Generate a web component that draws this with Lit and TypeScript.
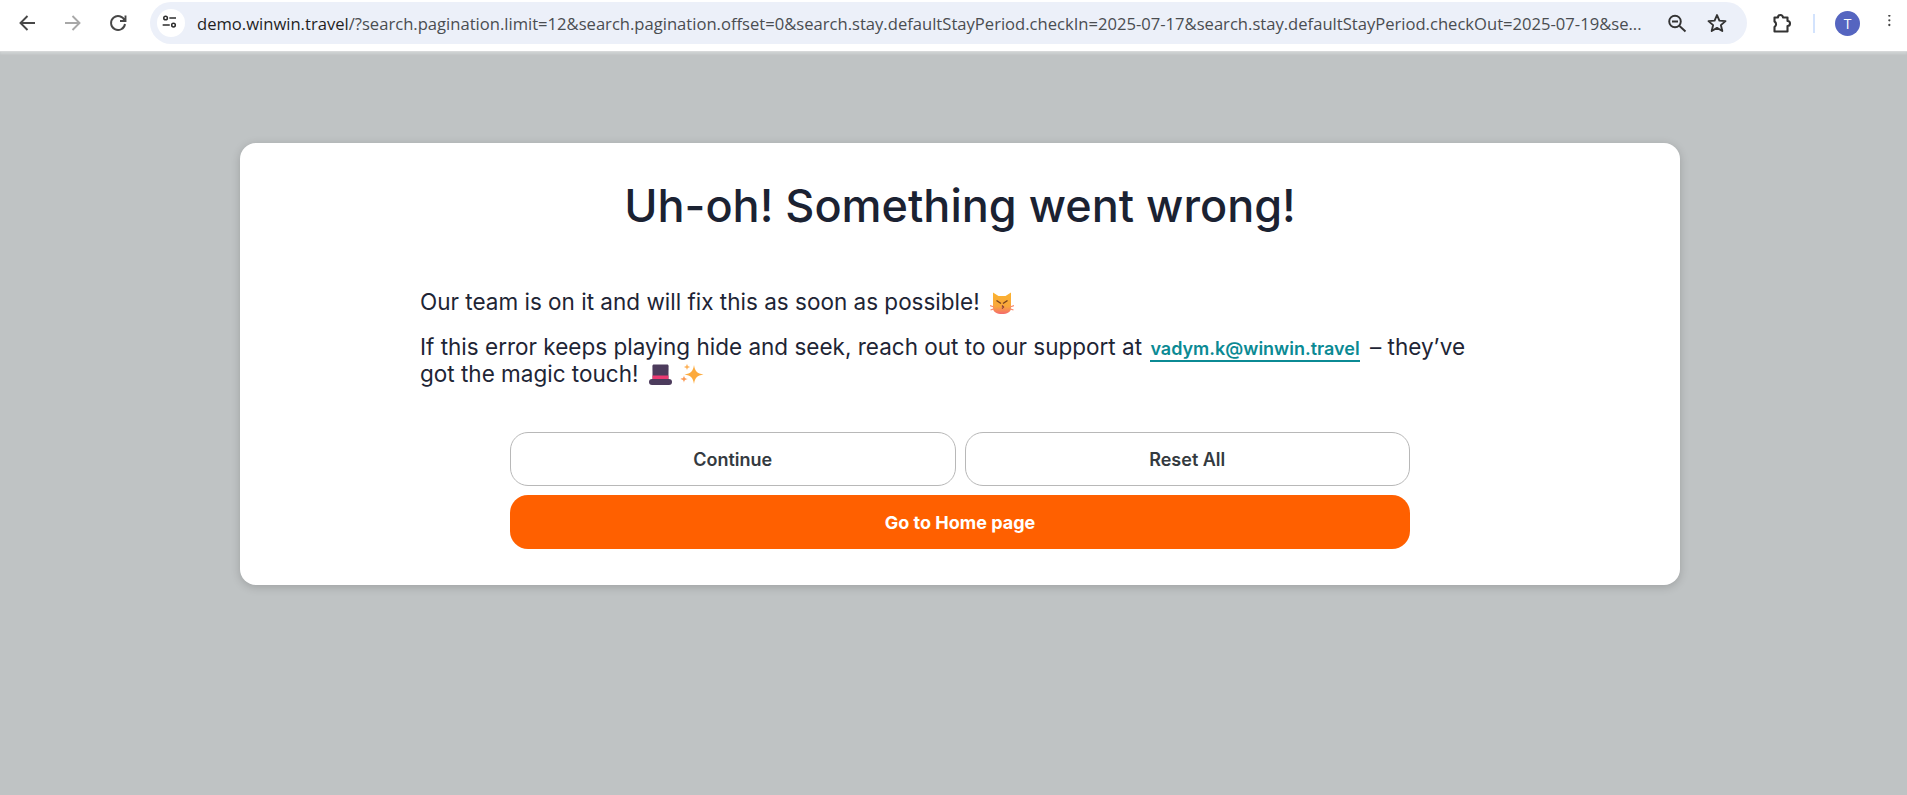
import { LitElement, html, css, svg } from "lit";
import { customElement } from "lit/decorators.js";

const icon = (w: number, body: unknown, vb = "0 0 24 24") =>
  html`<svg width=${w} height=${w} viewBox=${vb} fill="none" aria-hidden="true">${body}</svg>`;

const emoji = (w: number, body: unknown) =>
  html`<svg class="emoji" width=${w} height="24" viewBox="0 0 ${w} 24" fill="none" aria-hidden="true">${body}</svg>`;

const cat = svg`
  <defs>
    <linearGradient id="catfill" x1="0" y1="0" x2="0" y2="1">
      <stop offset="0" stop-color="#fbb32f"/>
      <stop offset="0.65" stop-color="#f9a63c"/>
      <stop offset="1" stop-color="#f46a6e"/>
    </linearGradient>
  </defs>
  <path d="M3 1.500l5.500 3.500h7L21 1.500V17c0 4-4 6-9 6s-9-2-9-6z" fill="url(#catfill)"/>
  <path d="M0 14.500l4 1.500M0.500 19l3.500-1.200M24 14.500l-4 1.500M23.500 19l-3.500-1.200" stroke="#f98b6e" stroke-width="1.300"/>
  <path d="M6.500 9.500l4.500 3M17.500 9.500l-4.500 3" stroke="#7a4220" stroke-width="1.500"/>
  <path d="M12 14.500l1.500 1.500-1.500 1.500" stroke="#8a3a3a" stroke-width="1.300"/>`;

const hat = svg`
  <path d="M5 1.500h13c1 0 1.600.6 1.600 1.500L19.400 16H3.600L3.400 3c0-.9.600-1.500 1.600-1.500z" fill="#4c3b5c"/>
  <path d="M3.500 12.500h16L19.400 17H3.600z" fill="#ec3a72"/>
  <rect x="0" y="16" width="23" height="6" rx="3" fill="#4c3b5c"/>`;

const sparkles = svg`
  <path d="M15 2c1 6.500 3 8.500 9.500 9.500-6.500 1-8.500 3-9.500 9.500-1-6.500-3-8.500-9.500-9.500C12 10.500 14 8.500 15 2z" fill="#fcaa3d"/>
  <path d="M8 0.800c.5 2.200 1 2.700 3.200 3.200-2.200.5-2.700 1-3.200 3.200-.5-2.200-1-2.700-3.200-3.200C7 3.500 7.500 3 8 0.800z" fill="#fdb25a"/>
  <path d="M5 12.200c.5 2.800 1.100 3.300 3.800 3.800-2.700.5-3.300 1-3.800 3.800-.5-2.800-1.100-3.300-3.800-3.800 2.700-.5 3.300-1 3.800-3.800z" fill="#fb9a55"/>`;

@customElement("app-root")
export class AppRoot extends LitElement {
  static styles = css`
    :host {
      display: flex;
      flex-direction: column;
      min-height: 100vh;
      background: #bfc3c4;
      font-family: Inter, "Liberation Sans", sans-serif;
      overflow: hidden;
    }
    .toolbar {
      flex: none;
      position: relative;
      height: 42px;
      padding: 2px 0 7px 0;
      display: flex;
      align-items: stretch;
      background: #fff;
      border-bottom: 1px solid #d6d8d9;
      box-shadow: 0 2px 2px rgba(255, 255, 255, 0.25);
    }
    .nav {
      display: flex;
      align-items: center;
      width: 150px;
      flex: none;
      padding-left: 15px;
      box-sizing: border-box;
      gap: 21.5px;
    }
    .omni {
      width: 1597px;
      flex: none;
      box-sizing: border-box;
      border-radius: 21px;
      background: #ecf0f9;
      display: flex;
      align-items: center;
      padding: 0 18px 0 7px;
    }
    .tune {
      width: 28px;
      height: 28px;
      border-radius: 50%;
      background: #fff;
      display: flex;
      align-items: center;
      justify-content: center;
      flex: none;
    }
    .url {
      margin-left: 12px;
      width: 1460px;
      flex: none;
      white-space: nowrap;
      overflow: hidden;
      font-family: "Open Sans", "Noto Sans", sans-serif;
      font-size: 16.6px;
      color: #4a4d51;
    }
    .url b {
      font-weight: 400;
      color: #1f1f1f;
    }
    .omni-icons {
      display: flex;
      align-items: center;
      gap: 16px;
      margin-left: auto;
    }
    .tools {
      display: flex;
      align-items: center;
      flex: 1;
      padding-left: 23px;
    }
    .sep {
      width: 2px;
      height: 19px;
      background: #d3e3fd;
      margin: 0 20px 0 19px;
    }
    .avatar {
      width: 25px;
      height: 25px;
      border-radius: 50%;
      background: #5565c0;
      color: #fff;
      font-size: 14px;
      display: flex;
      align-items: center;
      justify-content: center;
      font-family: "Open Sans", sans-serif;
    }
    .dots {
      margin-left: 24px;
      display: flex;
    }
    main {
      flex: 1;
      padding: 91px 0 0 240px;
    }
    .card {
      width: 1440px;
      box-sizing: border-box;
      height: 442px;
      background: #fff;
      border-radius: 16px;
      box-shadow: 0 2px 10px rgba(0, 0, 0, 0.18);
      padding: 35px 180px 0;
      display: flex;
      flex-direction: column;
      align-items: center;
    }
    h1 {
      margin: 0;
      font-size: 45px;
      line-height: 56px;
      font-weight: 450;
      color: #1b2232;
      text-align: center;
      white-space: nowrap;
    }
    .copy {
      margin-top: 54px;
      width: 100%;
      font-size: 22.5px;
      line-height: 27px;
      color: #1e2535;
    }
    .copy p {
      margin: 0 0 18px;
    }
    .emoji {
      vertical-align: -1px;
      margin: -4px 0 -4px 4px;
    }
    .copy a {
      font-size: 18px;
      line-height: 1;
      font-weight: 600;
      color: #0b8a94;
      text-decoration: none;
      border-bottom: 2px solid #0b8a94;
      padding-bottom: 1px;
      margin: 0 4px 0 2px;
    }
    .actions {
      margin-top: 27px;
      width: 900px;
      display: grid;
      grid-template-columns: 1fr 1fr;
      gap: 9px;
    }
    button {
      height: 54px;
      font: 600 18px Inter, "Liberation Sans", sans-serif;
      border-radius: 18px;
      cursor: pointer;
    }
    .ghost {
      background: #fff;
      color: #343a40;
      border: 1px solid #b8b8b8;
    }
    .primary {
      grid-column: 1 / 3;
      background: #ff6000;
      color: #fff;
      border: 0;
      font-weight: 700;
    }
  `;

  render() {
    return html`
      <header class="toolbar">
        <div class="nav">
          ${icon(24, svg`<path d="M20 12H6M12.500 5l-7 7 7 7" stroke="#474747" stroke-width="1.900"/>`)}
          ${icon(24, svg`<path d="M4 12h14M11.500 5l7 7-7 7" stroke="#a8a8a8" stroke-width="1.900"/>`)}
          ${icon(24, svg`<path d="M18.600 9.500A7 7 0 1 0 19 13M19.500 4.500V10H14" stroke="#474747" stroke-width="1.900"/>`)}
        </div>
        <div class="omni">
          <span class="tune">
            ${icon(20, svg`
              <circle cx="5.500" cy="6" r="2.200" stroke="#2d2d2d" stroke-width="1.800"/>
              <path d="M10 6h8M2 14.500h8.500" stroke="#2d2d2d" stroke-width="1.800"/>
              <circle cx="15" cy="14.500" r="2.200" stroke="#2d2d2d" stroke-width="1.800"/>`)}
          </span>
          <span class="url"><b>demo.winwin.travel</b>/?search.pagination.limit=12&amp;search.pagination.offset=0&amp;search.stay.defaultStayPeriod.checkIn=2025-07-17&amp;search.stay.defaultStayPeriod.checkOut=2025-07-19&amp;se...</span>
          <span class="omni-icons">
            ${icon(24, svg`
              <circle cx="10" cy="10.500" r="5.800" stroke="#333" stroke-width="1.900"/>
              <path d="M7 10.500h6M14.500 15l6 5.500" stroke="#333" stroke-width="1.900"/>`)}
            ${icon(24, svg`<path d="M12 4l2.400 5.600 6.100.5-4.600 4 1.400 5.900L12 16.900 6.700 20l1.400-5.900-4.600-4 6.100-.5z" stroke="#333" stroke-width="1.900" stroke-linejoin="round"/>`)}
          </span>
        </div>
        <div class="tools">
          ${icon(24, svg`<path d="M4.500 6.500H8a2.500 2.500 0 0 1 5 0h4.500V10a2.500 2.500 0 0 1 0 5v5.500h-13V16a3.200 3.200 0 0 0 0-5.500z" stroke="#333" stroke-width="2.100" stroke-linejoin="round"/>`)}
          <span class="sep"></span>
          <span class="avatar">T</span>
          <span class="dots">${icon(16, svg`<circle cx="8" cy="1" r="1.700" fill="#444"/><circle cx="8" cy="8" r="1.700" fill="#444"/><circle cx="8" cy="15" r="1.700" fill="#444"/>`)}</span>
        </div>
      </header>
      <main>
        <section class="card">
          <h1>Uh-oh! Something went wrong!</h1>
          <div class="copy">
            <p>Our team is on it and will fix this as soon as possible! ${emoji(24, cat)}</p>
            <p>If this error keeps playing hide and seek, reach out to our support at <a href="#">vadym.k@winwin.travel</a> – they’ve got the magic touch! ${emoji(26, hat)}${emoji(26, sparkles)}</p>
          </div>
          <div class="actions">
            <button class="ghost">Continue</button>
            <button class="ghost">Reset All</button>
            <button class="primary">Go to Home page</button>
          </div>
        </section>
      </main>
    `;
  }
}
